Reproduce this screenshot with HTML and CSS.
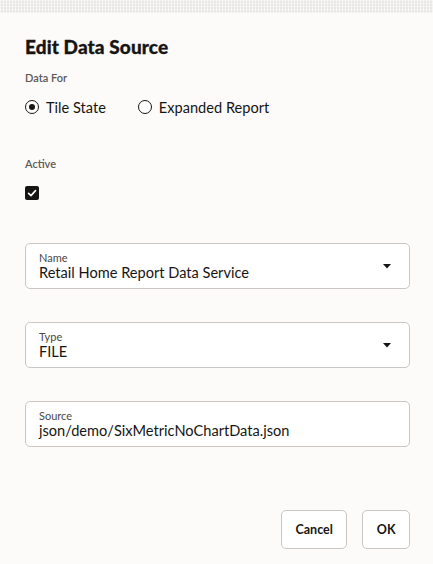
FILE: index.html
```html
<!DOCTYPE html>
<html lang="en">
<head>
<meta charset="utf-8">
<title>Edit Data Source</title>
<link rel="stylesheet" href="styles.css">
</head>
<body>
<div class="topbar"></div>
<main class="dialog">
  <h1 class="title">Edit Data Source</h1>
  <div class="label data-for">Data For</div>
  <div class="radio-row">
    <label class="radio"><span class="radio-circle checked"></span><span class="radio-text">Tile State</span></label>
    <label class="radio"><span class="radio-circle"></span><span class="radio-text">Expanded Report</span></label>
  </div>
  <div class="label active-label">Active</div>
  <div class="checkbox">
    <svg viewBox="0 0 14 14" width="14" height="14"><rect x="0" y="0" width="14" height="14" rx="2" fill="#161513"/><path d="M3.6 7.3 L6 9.6 L10.5 4.6" fill="none" stroke="#fff" stroke-width="1.6" stroke-linecap="round" stroke-linejoin="round"/></svg>
  </div>
  <div class="field select first">
    <div class="field-text">
      <div class="field-label">Name</div>
      <div class="field-value">Retail Home Report Data Service</div>
    </div>
    <svg class="caret" viewBox="0 0 8 5" width="8" height="5"><path d="M0 0 H8 L4 4.5 Z" fill="#161513"/></svg>
  </div>
  <div class="field select">
    <div class="field-text">
      <div class="field-label">Type</div>
      <div class="field-value">FILE</div>
    </div>
    <svg class="caret" viewBox="0 0 8 5" width="8" height="5"><path d="M0 0 H8 L4 4.5 Z" fill="#161513"/></svg>
  </div>
  <div class="field">
    <div class="field-text">
      <div class="field-label">Source</div>
      <div class="field-value">json/demo/SixMetricNoChartData.json</div>
    </div>
  </div>
  <div class="actions">
    <button class="btn">Cancel</button>
    <button class="btn">OK</button>
  </div>
</main>
</body>
</html>
```
FILE: styles.css
```css
html, body {
  margin: 0;
  padding: 0;
}
body {
  background: #fcfbfa;
  font-family: Lato, "Noto Sans", sans-serif;
  color: #161513;
  width: 433px;
  height: 564px;
  overflow: hidden;
}
.topbar {
  height: 13px;
  background-color: #e9e7e5;
  background-image:
    repeating-linear-gradient(90deg, rgba(255,255,255,0.55) 0 1px, transparent 1px 3px),
    repeating-linear-gradient(0deg, rgba(255,255,255,0.4) 0 1px, transparent 1px 3px);
}
.dialog {
  padding: 0 23px 0 25px;
  display: flex;
  flex-direction: column;
}
.title {
  margin: 22px 0 0;
  font-size: 19px;
  line-height: 24px;
  font-weight: 900;
  letter-spacing: 0.1px;
  -webkit-text-stroke: 0.3px #161513;
}
.label {
  font-size: 11px;
  line-height: 16px;
  color: #5b5856;
  font-weight: 600;
}
.data-for {
  margin-top: 11px;
}
.radio-row {
  margin-top: 9px;
  display: flex;
  gap: 32px;
  height: 24px;
  align-items: center;
}
.radio {
  display: flex;
  align-items: center;
  gap: 7px;
  font-size: 14.6px;
}
.radio-circle {
  width: 14px;
  height: 14px;
  box-sizing: border-box;
  border: 1.5px solid #161513;
  border-radius: 50%;
  display: flex;
  align-items: center;
  justify-content: center;
  background: #fff;
}
.radio-circle.checked::after {
  content: "";
  width: 6px;
  height: 6px;
  border-radius: 50%;
  background: #161513;
}
.active-label {
  margin-top: 37px;
}
.checkbox {
  margin-top: 14px;
  height: 14px;
  line-height: 0;
}
.field {
  margin-top: 33px;
  height: 46px;
  box-sizing: border-box;
  background: #fff;
  border: 1px solid #c9c6c3;
  border-radius: 5px;
  display: flex;
  align-items: center;
  padding: 0 18px 0 13px;
}
.field.first {
  margin-top: 43px;
}
.field-text {
  flex: 1;
  display: flex;
  flex-direction: column;
}
.field-label {
  font-size: 11px;
  line-height: 13px;
  color: #4a4745;
}
.field-value {
  font-size: 14.6px;
  line-height: 18px;
}
.caret {
  display: block;
}
.actions {
  margin-top: 63px;
  display: flex;
  justify-content: flex-end;
  gap: 15px;
}
.btn {
  height: 39px;
  box-sizing: border-box;
  padding: 0 13.5px;
  background: #fff;
  border: 1px solid #c9c6c3;
  border-radius: 5px;
  font-family: Lato, "Noto Sans", sans-serif;
  font-size: 12.5px;
  font-weight: 700;
  color: #161513;
}
```
